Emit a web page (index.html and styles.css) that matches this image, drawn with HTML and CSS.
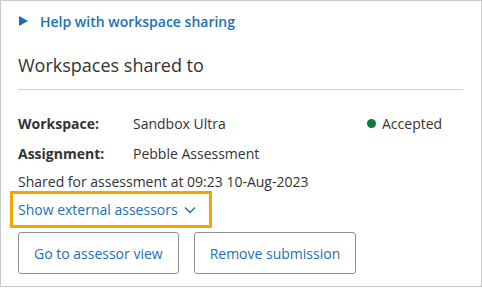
FILE: index.html
```html
<!DOCTYPE html>
<html lang="en">
<head>
    <meta charset="UTF-8">
    <title>Workspaces shared to</title>
    <link rel="stylesheet" href="styles.css">
</head>
<body>

    <div class="panel">
        <div class="help">
            <span class="help-arrow"></span>
            <a href="#" class="help-link">Help with workspace sharing</a>
        </div>

        <h2>Workspaces shared to</h2>

        <div class="share">
            <div class="row">
                <span class="label">Workspace:</span>
                <span class="value">Sandbox Ultra</span>
                <span class="status"><span class="dot"></span>Accepted</span>
            </div>
            <div class="row">
                <span class="label">Assignment:</span>
                <span class="value">Pebble Assessment</span>
            </div>
            <p class="shared-at">Shared for assessment at 09:23 10-Aug-2023</p>

            <button class="toggle">
                Show external assessors
                <svg width="12" height="8" viewBox="0 0 12 8"><path d="M1 1.5 L6 6.5 L11 1.5" fill="none" stroke="#1c6fb5" stroke-width="1.4"/></svg>
            </button>

            <div class="actions">
                <button class="btn">Go to assessor view</button>
                <button class="btn">Remove submission</button>
            </div>
        </div>
    </div>

</body>
</html>
```

FILE: styles.css
```css
body {
    margin: 0;
    font-family: "Open Sans", Arial, sans-serif;
    font-size: 14px;
    color: #333;
    background: #fff;
}
.panel {
    width: 482px;
    height: 287px;
    box-sizing: border-box;
    border: 1px solid #c8c8c8;
    padding: 0 17px;
}
.help {
    display: flex;
    align-items: center;
    height: 40px;
    padding-left: 1px;
}
.help-arrow {
    width: 0;
    height: 0;
    border-top: 5.5px solid transparent;
    border-bottom: 5.5px solid transparent;
    border-left: 9px solid #1c6fb5;
    margin-right: 12px;
}
.help-link {
    color: #1c6fb5;
    font-weight: 600;
    text-decoration: none;
}
h2 {
    margin: 0;
    font-size: 18px;
    font-weight: 400;
    color: #333;
    line-height: 24px;
    padding: 12px 0 12px;
    border-bottom: 1px solid #d0d0d0;
    margin-right: 1px;
}
.share {
    padding-top: 18px;
}
.row {
    display: flex;
    align-items: center;
    height: 30px;
}
.label {
    width: 115px;
    font-weight: 700;
}
.value {
    flex: 1;
}
.status {
    display: flex;
    align-items: center;
    width: 97px;
}
.dot {
    width: 9px;
    height: 9px;
    border-radius: 50%;
    background: #0f7a3c;
    margin-right: 6px;
}
.shared-at {
    margin: 3px 0 0;
    line-height: 22px;
}
.toggle {
    display: flex;
    align-items: center;
    gap: 6px;
    margin: -2px 0 0 -8px;
    padding: 0 13px 0 5px;
    height: 37px;
    border: 3px solid #f5a500;
    background: #fff;
    font-family: inherit;
    font-size: 14px;
    color: #1c6fb5;
    cursor: pointer;
}
.actions {
    display: flex;
    gap: 15px;
    margin-top: 4px;
}
.btn {
    height: 42px;
    padding: 0 15px;
    border: 1px solid #8c9196;
    border-radius: 3px;
    background: #fff;
    font-family: inherit;
    font-size: 14px;
    color: #1c6fb5;
    cursor: pointer;
}
```
